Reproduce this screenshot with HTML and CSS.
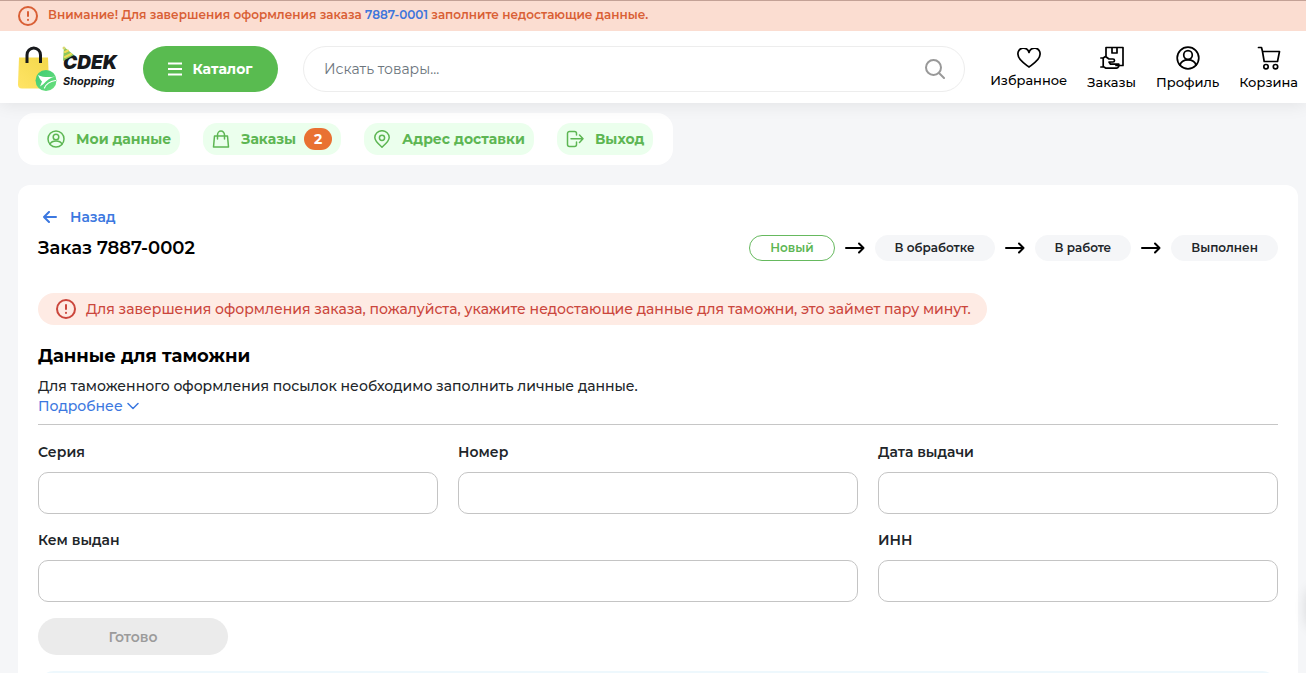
FILE: index.html
```html
<!DOCTYPE html>
<html lang="ru">
<head>
<meta charset="utf-8">
<title>Заказ 7887-0002</title>
<link rel="stylesheet" href="styles.css">
</head>
<body>
<div class="notice">
  <svg class="icon-alert" viewBox="0 0 20 20"><circle cx="10" cy="10" r="9"/><path d="M10 6v4M10 13.800v.2"/></svg>
  <p class="notice-text">Внимание! Для завершения оформления заказа <a href="#">7887-0001</a> заполните недостающие данные.</p>
</div>
<header class="header">
  <a class="logo" href="#" aria-label="CDEK Shopping">
    <svg class="logo-bag" viewBox="0 0 40 46">
      <defs>
        <linearGradient id="bag" x1="1" y1="0" x2="0" y2="1"><stop offset="0" stop-color="#f3d84b"/><stop offset="1" stop-color="#ffe466"/></linearGradient>
        <linearGradient id="ball" x1="0" y1="0" x2="1" y2="1"><stop offset="0" stop-color="#3ecb74"/><stop offset="1" stop-color="#6be07d"/></linearGradient>
      </defs>
      <path fill="url(#bag)" d="M1 11.500h29l1 27a4 4 0 0 1-4 4H4a4 4 0 0 1-4-4z"/>
      <path fill="none" stroke="#17191c" stroke-width="3" stroke-linecap="butt" d="M9 17V9a6.700 7 0 0 1 13.500 0v8"/>
      <circle cx="28" cy="34.500" r="10.500" fill="url(#ball)"/>
      <path fill="#fff" d="M20 29c5 2.500 11 2.500 17.500 1.500-5 1-9 4-12 7.500l-3.500 2.500 2-5c-1.500-1.500-3-4-4-6.500z"/>
      <path fill="none" stroke="#fff" stroke-width="1.200" d="M26.500 42c1.500-4 5-6.500 11-7.500"/>
    </svg>
    <span class="logo-words">
      <svg class="logo-hat" viewBox="0 0 14 15"><path fill="#8bc65c" d="M2 1l10 8-11 6z"/><path fill="none" stroke="#f1dc55" stroke-width="2" d="M3 6l3-1.500M3 11l6-3"/><circle cx="2" cy="2" r="1.500" fill="#d9d873"/></svg>
      <span class="logo-name">CDEK</span>
      <span class="logo-sub">Shopping</span>
    </span>
  </a>
  <button class="catalog" type="button">
    <svg class="icon-menu" viewBox="0 0 14 14"><path d="M0 1.500h14M0 7h14M0 12.500h14"/></svg>Каталог
  </button>
  <form class="search">
    <input class="search-input" type="search" placeholder="Искать товары..." aria-label="Искать товары">
    <button class="search-button" type="button" aria-label="Найти"><svg class="icon-search" viewBox="0 0 20 20"><circle cx="8.500" cy="8.500" r="7.500"/><path d="M14 14l5 5"/></svg></button>
  </form>
  <nav class="shortcuts">
    <a class="shortcut" href="#"><svg class="icon-line icon-heart" viewBox="0 0 24 20"><path d="M12 19C8 16 1 12 1 6.600A5.600 5.600 0 0 1 12 4.500 5.600 5.600 0 0 1 23 6.600C23 12 16 16 12 19z"/></svg>Избранное</a>
    <a class="shortcut" href="#"><svg class="icon-line" viewBox="0 0 24 24"><path d="M6 10.500V1.500h17V19.500H16M12 1.500V7h5V1.500M.8 12h2.400L5.500 10.500 9 13h4a1.500 1.500 0 0 1 0 3H9l1.500 2.200h8.300c.4 2-.5 4-2.300 4H6l-2-1.200H.8M3.200 12v9"/></svg>Заказы</a>
    <a class="shortcut" href="#"><svg class="icon-line" viewBox="0 0 24 24"><circle cx="12" cy="12" r="10.800"/><circle cx="12" cy="9" r="4.300"/><path d="M4 19.200c2-7 14-7 16 0"/></svg>Профиль</a>
    <a class="shortcut" href="#"><svg class="icon-line" viewBox="0 0 24 24"><path d="M1.500 1.500h3l1 4h17l-2 10H7.200L5.500 5.500"/><circle cx="9" cy="20.700" r="2.200"/><circle cx="18.500" cy="20.700" r="2.200"/></svg>Корзина</a>
  </nav>
</header>
<main class="page">
  <nav class="tabs">
    <a class="tab" href="#"><svg class="icon-tab" viewBox="0 0 18 18"><circle cx="9" cy="9" r="8"/><circle cx="9" cy="7" r="2.800"/><path d="M3 14c2-4 10-4 12 0"/></svg>Мои данные</a>
    <a class="tab" href="#"><svg class="icon-tab" viewBox="0 0 18 18"><path d="M2.500 6h13l1 11h-15zM5.500 9V5a3.500 4 0 0 1 7 0v4"/></svg>Заказы<span class="count">2</span></a>
    <a class="tab" href="#"><svg class="icon-tab" viewBox="0 0 18 18"><path d="M9 17.200C5 13.500 1.800 11 1.800 7.500a7.200 6.800 0 0 1 14.400 0C16.200 11 13 13.500 9 17.200z"/><circle cx="9" cy="7.800" r="2.600"/></svg>Адрес доставки</a>
    <a class="tab" href="#"><svg class="icon-tab" viewBox="0 0 18 18"><path d="M10.500 5V3.500a2 2 0 0 0-2-2h-5a2 2 0 0 0-2 2v11a2 2 0 0 0 2 2h5a2 2 0 0 0 2-2V12M5 8.800h12M13.500 5l3.500 3.800-3.500 3.700"/></svg>Выход</a>
  </nav>
  <section class="card">
    <a class="back" href="#"><svg class="icon-back" viewBox="0 0 14 12"><path d="M13 6H1M6 1L1 6l5 5"/></svg>Назад</a>
    <div class="order-head">
      <h1 class="order-title">Заказ 7887-0002</h1>
      <ol class="steps">
        <li class="step step-new">Новый</li>
        <li class="arrow" aria-hidden="true"><svg class="icon-arrow" viewBox="0 0 20 12"><path d="M1 6h17.500M14 1.500L18.500 6 14 10.500"/></svg></li>
        <li class="step">В обработке</li>
        <li class="arrow" aria-hidden="true"><svg class="icon-arrow" viewBox="0 0 20 12"><path d="M1 6h17.500M14 1.500L18.500 6 14 10.500"/></svg></li>
        <li class="step">В работе</li>
        <li class="arrow" aria-hidden="true"><svg class="icon-arrow" viewBox="0 0 20 12"><path d="M1 6h17.500M14 1.500L18.500 6 14 10.500"/></svg></li>
        <li class="step">Выполнен</li>
      </ol>
    </div>
    <p class="warning"><svg class="icon-alert" viewBox="0 0 20 20"><circle cx="10" cy="10" r="9"/><path d="M10 6v4M10 13.800v.2"/></svg>Для завершения оформления заказа, пожалуйста, укажите недостающие данные для таможни, это займет пару минут.</p>
    <h2 class="customs-title">Данные для таможни</h2>
    <p class="customs-text">Для таможенного оформления посылок необходимо заполнить личные данные.</p>
    <button class="more" type="button">Подробнее<svg class="icon-chevron" viewBox="0 0 12 8"><path d="M1 1.500l5 5 5-5"/></svg></button>
    <form class="fields">
      <div class="field"><label for="series">Серия</label><input id="series" type="text"></div>
      <div class="field"><label for="number">Номер</label><input id="number" type="text"></div>
      <div class="field"><label for="date">Дата выдачи</label><input id="date" type="text"></div>
      <div class="field field-wide"><label for="issuer">Кем выдан</label><input id="issuer" type="text"></div>
      <div class="field"><label for="inn">ИНН</label><input id="inn" type="text"></div>
      <button class="submit" type="submit" disabled>Готово</button>
    </form>
    <div class="info"></div>
  </section>
</main>
<div class="side-handle"></div>
</body>
</html>
```
FILE: styles.css
```css
* { box-sizing: border-box; }
html { height: 100%; overflow: hidden; }
body { height: 100%; margin: 0; overflow: hidden; background: #f5f6f8; color: #212529; font-family: Montserrat, Inter, "Noto Sans", sans-serif; font-size: 14px; line-height: 20px; }
a { color: inherit; text-decoration: none; }
button, input { font: inherit; }
button { border: 0; padding: 0; background: none; }
h1, h2, p, ol { margin: 0; padding: 0; }
svg { flex: none; fill: none; stroke-linecap: round; stroke-linejoin: round; }

.notice { position: relative; z-index: 2; display: flex; align-items: center; gap: 10px; height: 31px; padding: 0 18px; border-top: 1px solid #c3a196; background: #fbddd1; color: #d95f35; font-size: 12px; font-weight: 600; }
.notice-text { padding-bottom: 2px; }
.notice a { color: #3f76dc; }
.icon-alert { width: 20px; height: 20px; stroke: currentColor; stroke-width: 2; }

.header { position: relative; z-index: 1; display: flex; align-items: center; height: 72px; padding: 4px 8px 0 18px; background: #fff; box-shadow: 0 2px 16px rgba(0, 0, 0, 0.08); }
.logo { display: flex; width: 125px; color: #17191c; }
.logo-bag { width: 40px; height: 46px; }
.logo-words { position: relative; display: flex; flex-direction: column; padding: 6px 0 0 5px; font-family: Inter, sans-serif; font-style: italic; }
.logo-hat { position: absolute; left: 4px; top: 0; width: 14px; height: 15px; }
.logo-name { font-size: 19px; font-weight: 900; line-height: 22px; }
.logo-sub { font-size: 11px; font-weight: 700; line-height: 14px; }
.catalog { display: flex; align-items: center; justify-content: center; gap: 10px; width: 135px; height: 46px; border-radius: 23px; background: #59bb50; color: #fff; font-weight: 700; }
.icon-menu { width: 14px; height: 14px; stroke: currentColor; stroke-width: 2; }
.search { display: flex; align-items: center; flex: 1; height: 46px; margin: 0 25px; padding: 0 19px 0 20px; border: 1px solid #ededed; border-radius: 23px; }
.search-input { flex: 1; min-width: 0; padding: 0; border: 0; outline: 0; background: none; }
.search-input::placeholder { color: #6c757d; opacity: 1; }
.search-button { display: flex; }
.icon-search { width: 20px; height: 20px; stroke: #999; stroke-width: 2; }
.shortcuts { display: flex; align-items: flex-start; gap: 20px; padding-bottom: 2px; }
.shortcut { display: flex; flex-direction: column; align-items: center; gap: 3px; color: #000; font-size: 13px; font-weight: 500; line-height: 18px; }
.icon-line { width: 24px; height: 24px; stroke: currentColor; stroke-width: 1.7; }
.icon-heart { height: 20px; margin-top: 2px; }

.page { padding: 10px 8px 0 18px; }
.tabs { display: flex; gap: 23px; width: fit-content; padding: 10px 20px; border-radius: 16px; background: #fff; }
.tab { display: flex; align-items: center; height: 32px; padding: 0 9px; border-radius: 14px; background: #ebffed; color: #5db653; font-weight: 700; }
.icon-tab { width: 18px; height: 18px; margin-right: 11px; stroke: currentColor; stroke-width: 1.5; }
.count { width: 28px; margin-left: 8px; border-radius: 11px; background: #e97132; color: #fff; line-height: 22px; text-align: center; }

.card { margin-top: 20px; padding: 22px 20px 0; border-radius: 12px; background: #fff; }
.back { display: flex; align-items: center; gap: 13px; width: fit-content; padding-left: 5px; color: #3c78e0; font-weight: 600; }
.icon-back { width: 14px; height: 12px; stroke: currentColor; stroke-width: 2; }
.order-head { display: flex; align-items: center; justify-content: space-between; height: 41px; }
.order-title { color: #000; font-size: 18px; font-weight: 600; line-height: 24px; }
.steps { display: flex; align-items: center; gap: 10px; list-style: none; }
.step { padding: 0 19px; border: 1px solid #f5f6f8; border-radius: 13px; background: #f5f6f8; font-size: 12px; font-weight: 600; line-height: 24px; }
.step-new { padding: 0 20px; border-color: #66b95e; background: #fff; color: #5db653; }
.arrow { display: flex; }
.icon-arrow { width: 20px; height: 12px; stroke: #000; stroke-width: 2; }
.warning { display: flex; align-items: center; gap: 10px; width: fit-content; height: 32px; margin-top: 25px; padding: 0 16px 0 18px; border-radius: 16px; background: #feebe4; color: #cb463c; font-weight: 500; white-space: nowrap; }
.customs-title { margin-top: 18px; color: #000; font-size: 18px; font-weight: 700; line-height: 26px; }
.customs-text { margin-top: 7px; font-weight: 500; }
.more { display: flex; align-items: center; gap: 4px; color: #3c78e0; font-weight: 500; }
.icon-chevron { width: 12px; height: 8px; stroke: currentColor; stroke-width: 1.5; }
.fields { display: grid; grid-template-columns: repeat(3, 1fr); gap: 16px 20px; margin-top: 8px; padding-top: 17px; border-top: 1px solid #c6c6c6; }
.field { display: flex; flex-direction: column; gap: 10px; font-weight: 600; }
.field-wide { grid-column: span 2; }
.field input { width: 100%; height: 42px; padding: 0 12px; border: 1px solid #c4c4c4; border-radius: 10px; background: #fff; }
.submit { width: 190px; height: 37px; border-radius: 19px; background: #ebebeb; color: #9b9b9b; font-weight: 600; }
.info { height: 60px; margin-top: 16px; border-radius: 16px; background: #eef8fd; }
.side-handle { position: fixed; right: -22px; top: 588px; width: 20px; height: 40px; border-radius: 20px; box-shadow: 0 0 14px rgba(0, 0, 0, 0.16); }
```
